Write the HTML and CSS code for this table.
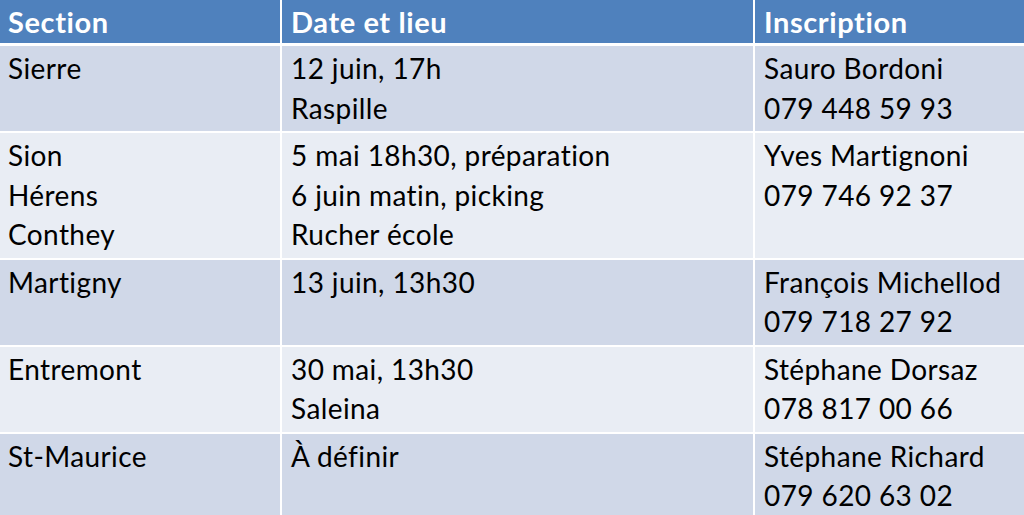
FILE: index.html
```html
<!DOCTYPE html>
<html lang="fr">
<head>
<meta charset="utf-8">
<link rel="stylesheet" href="styles.css">
</head>
<body>
<div class="table">
  <div class="cell head">Section</div>
  <div class="cell head">Date et lieu</div>
  <div class="cell head">Inscription</div>

  <div class="cell dark">Sierre</div>
  <div class="cell dark">12 juin, 17h<br>Raspille</div>
  <div class="cell dark">Sauro Bordoni<br>079 448 59 93</div>

  <div class="cell light">Sion<br>Hérens<br>Conthey</div>
  <div class="cell light">5 mai 18h30, préparation<br>6 juin matin, picking<br>Rucher école</div>
  <div class="cell light">Yves Martignoni<br>079 746 92 37</div>

  <div class="cell dark">Martigny</div>
  <div class="cell dark">13 juin, 13h30</div>
  <div class="cell dark">François Michellod<br>079 718 27 92</div>

  <div class="cell light">Entremont</div>
  <div class="cell light">30 mai, 13h30<br>Saleina</div>
  <div class="cell light">Stéphane Dorsaz<br>078 817 00 66</div>

  <div class="cell dark">St-Maurice</div>
  <div class="cell dark">À définir</div>
  <div class="cell dark">Stéphane Richard<br>079 620 63 02</div>
</div>
</body>
</html>
```
FILE: styles.css
```css
html, body {
  margin: 0;
  padding: 0;
  background: #ffffff;
  overflow: hidden;
}
.table {
  display: grid;
  grid-template-columns: 280px 471px 1fr;
  column-gap: 2px;
  row-gap: 2px;
  background: #ffffff;
  width: 1024px;
  font-family: Lato, "Liberation Sans", sans-serif;
  font-size: 28px;
  letter-spacing: 0.4px;
  font-variant-ligatures: none;
  color: #000000;
}
.cell {
  padding: 3px 8px 3px 9px;
  line-height: 39.5px;
}
.cell:nth-child(3n+1) {
  padding-left: 8px;
}
.head {
  background: #4f81bd;
  color: #ffffff;
  font-weight: bold;
  font-size: 29px;
  letter-spacing: 0.6px;
  line-height: 37px;
  padding-top: 3px;
  padding-bottom: 3px;
  margin-bottom: 1px;
}
.dark {
  background: #d0d8e8;
}
.light {
  background: #e9edf4;
}
```
